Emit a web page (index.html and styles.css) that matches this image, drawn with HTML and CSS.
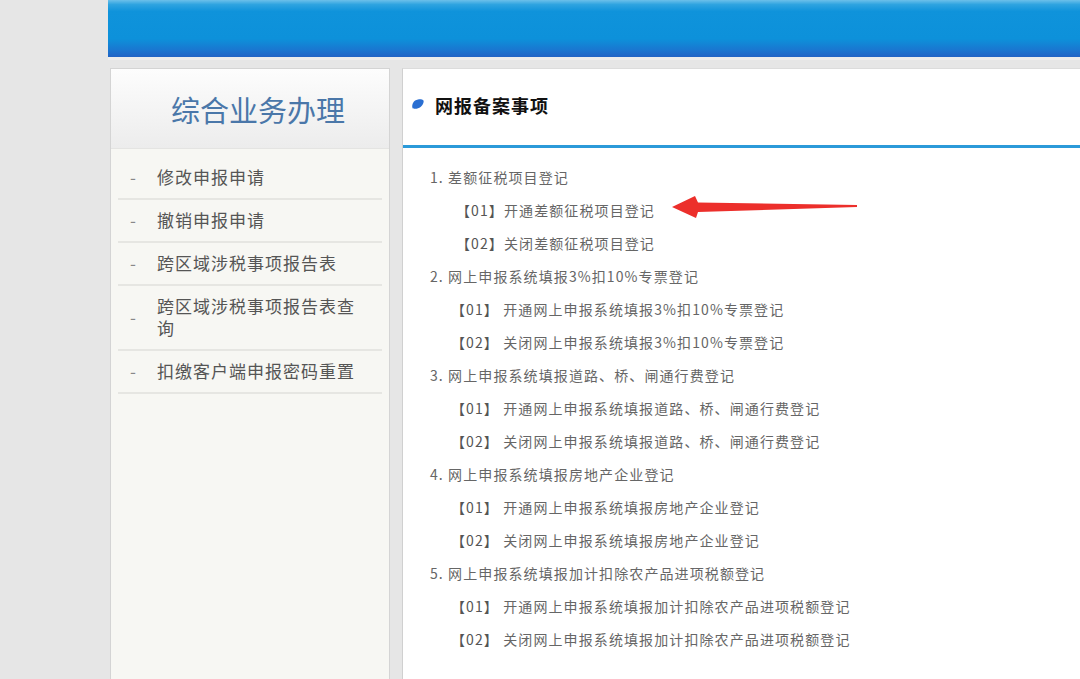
FILE: index.html
```html
<!DOCTYPE html>
<html lang="zh-CN">
<head>
  <meta charset="UTF-8">
  <title>综合业务办理</title>
  <link rel="stylesheet" href="styles.css">
</head>
<body>
  <div class="page">
    <div class="topbar"></div>

    <div class="main">
      <div class="sidebar">
        <div class="sidebar-title">综合业务办理</div>
        <ul class="menu">
          <li><span class="dash">-</span><span class="menu-text">修改申报申请</span></li>
          <li><span class="dash">-</span><span class="menu-text">撤销申报申请</span></li>
          <li><span class="dash">-</span><span class="menu-text">跨区域涉税事项报告表</span></li>
          <li><span class="dash">-</span><span class="menu-text">跨区域涉税事项报告表查询</span></li>
          <li><span class="dash">-</span><span class="menu-text">扣缴客户端申报密码重置</span></li>
        </ul>
      </div>

      <div class="content">
        <div class="content-head">
          <svg class="leaf" width="14" height="12" viewBox="0 0 14 12">
            <path d="M1.5 10 C0.5 7 2.5 2 7 1.5 C10.5 1 13.5 1.5 12.5 4.5 C11.5 8 8.5 10.8 4 10.8 C2.8 10.8 1.8 10.6 1.5 10 Z" fill="#2a6fd2"/>
          </svg>
          <span class="content-title">网报备案事项</span>
        </div>

        <div class="items">
          <div class="group">1. 差额征税项目登记</div>
          <div class="sub sub-tight"><span class="code">【01】</span>开通差额征税项目登记</div>
          <div class="sub sub-tight"><span class="code">【02】</span>关闭差额征税项目登记</div>

          <div class="group">2. 网上申报系统填报3%扣10%专票登记</div>
          <div class="sub"><span class="code">【01】</span> 开通网上申报系统填报3%扣10%专票登记</div>
          <div class="sub"><span class="code">【02】</span> 关闭网上申报系统填报3%扣10%专票登记</div>

          <div class="group">3. 网上申报系统填报道路、桥、闸通行费登记</div>
          <div class="sub"><span class="code">【01】</span> 开通网上申报系统填报道路、桥、闸通行费登记</div>
          <div class="sub"><span class="code">【02】</span> 关闭网上申报系统填报道路、桥、闸通行费登记</div>

          <div class="group">4. 网上申报系统填报房地产企业登记</div>
          <div class="sub"><span class="code">【01】</span> 开通网上申报系统填报房地产企业登记</div>
          <div class="sub"><span class="code">【02】</span> 关闭网上申报系统填报房地产企业登记</div>

          <div class="group">5. 网上申报系统填报加计扣除农产品进项税额登记</div>
          <div class="sub"><span class="code">【01】</span> 开通网上申报系统填报加计扣除农产品进项税额登记</div>
          <div class="sub"><span class="code">【02】</span> 关闭网上申报系统填报加计扣除农产品进项税额登记</div>
        </div>

        <!-- 标注箭头 -->
        <svg class="arrow" width="190" height="26" viewBox="0 0 190 26">
          <path d="M1 13 L24 2 L27 8.5 L186 11 L186 13 L27 18 L25 24 Z" fill="#ec2f2b"/>
        </svg>
      </div>
    </div>
  </div>
</body>
</html>
```

FILE: styles.css
```css
body {
  margin: 0;
  background-color: #e6e6e6;
  font-family: "Noto Sans CJK SC", "Noto Sans", sans-serif;
  color: #666;
  overflow: hidden;
}

.page {
  margin-left: 108px;
  height: 679px;
}

.topbar {
  height: 57px;
  background: linear-gradient(to bottom, #6cc0ea 0, #2ea3e0 8%, #0f93db 20%, #0d91da 68%, #1a76d0 88%, #2163c5 100%);
  border-bottom: 3px solid #ececec;
}

.main {
  display: flex;
  gap: 12px;
  padding-top: 8px;
  height: 611px;
}

/* 左侧菜单 */
.sidebar {
  width: 280px;
  margin-left: 2px;
  background-color: #f7f7f3;
  border: 1px solid #d4d4d4;
  border-bottom: none;
  box-sizing: border-box;
}

.sidebar-title {
  height: 79px;
  display: flex;
  align-items: center;
  justify-content: center;
  padding-left: 16px;
  font-size: 29px;
  color: #4a77a9;
  background: linear-gradient(to bottom, #fdfdfd, #ececec);
  border-bottom: 1px solid #e4e4e2;
}

.menu {
  list-style: none;
  margin: 8px 7px 0;
  padding: 0;
}

.menu li {
  display: flex;
  align-items: center;
  padding: 9px 20px 10px 0;
  border-bottom: 2px solid #e6e6e2;
  font-size: 17px;
  line-height: 22px;
  letter-spacing: 1px;
  color: #555;
}

.dash {
  width: 27px;
  margin-left: 12px;
  flex-shrink: 0;
  color: #888;
}

/* 右侧内容 */
.content {
  flex: 1;
  position: relative;
  background-color: #fff;
  border-left: 1px solid #d0d0d0;
  border-top: 1px solid #dcdcdc;
}

.content-head {
  height: 79px;
  display: flex;
  align-items: center;
  padding: 0 0 5px 8px;
  box-sizing: border-box;
  border-bottom: 3px solid #2b9ad9;
}

.leaf {
  margin-right: 10px;
  margin-top: -2px;
}

.content-title {
  font-size: 18px;
  font-weight: 700;
  letter-spacing: 1px;
  color: #111;
}

.items {
  padding: 13px 0 0 27px;
  font-size: 14px;
  line-height: 33px;
  letter-spacing: 1.1px;
}

.sub {
  padding-left: 21px;
}

.sub-tight {
  padding-left: 26px;
}

.code {
  color: #555;
}

.arrow {
  position: absolute;
  left: 268px;
  top: 125px;
}
```
